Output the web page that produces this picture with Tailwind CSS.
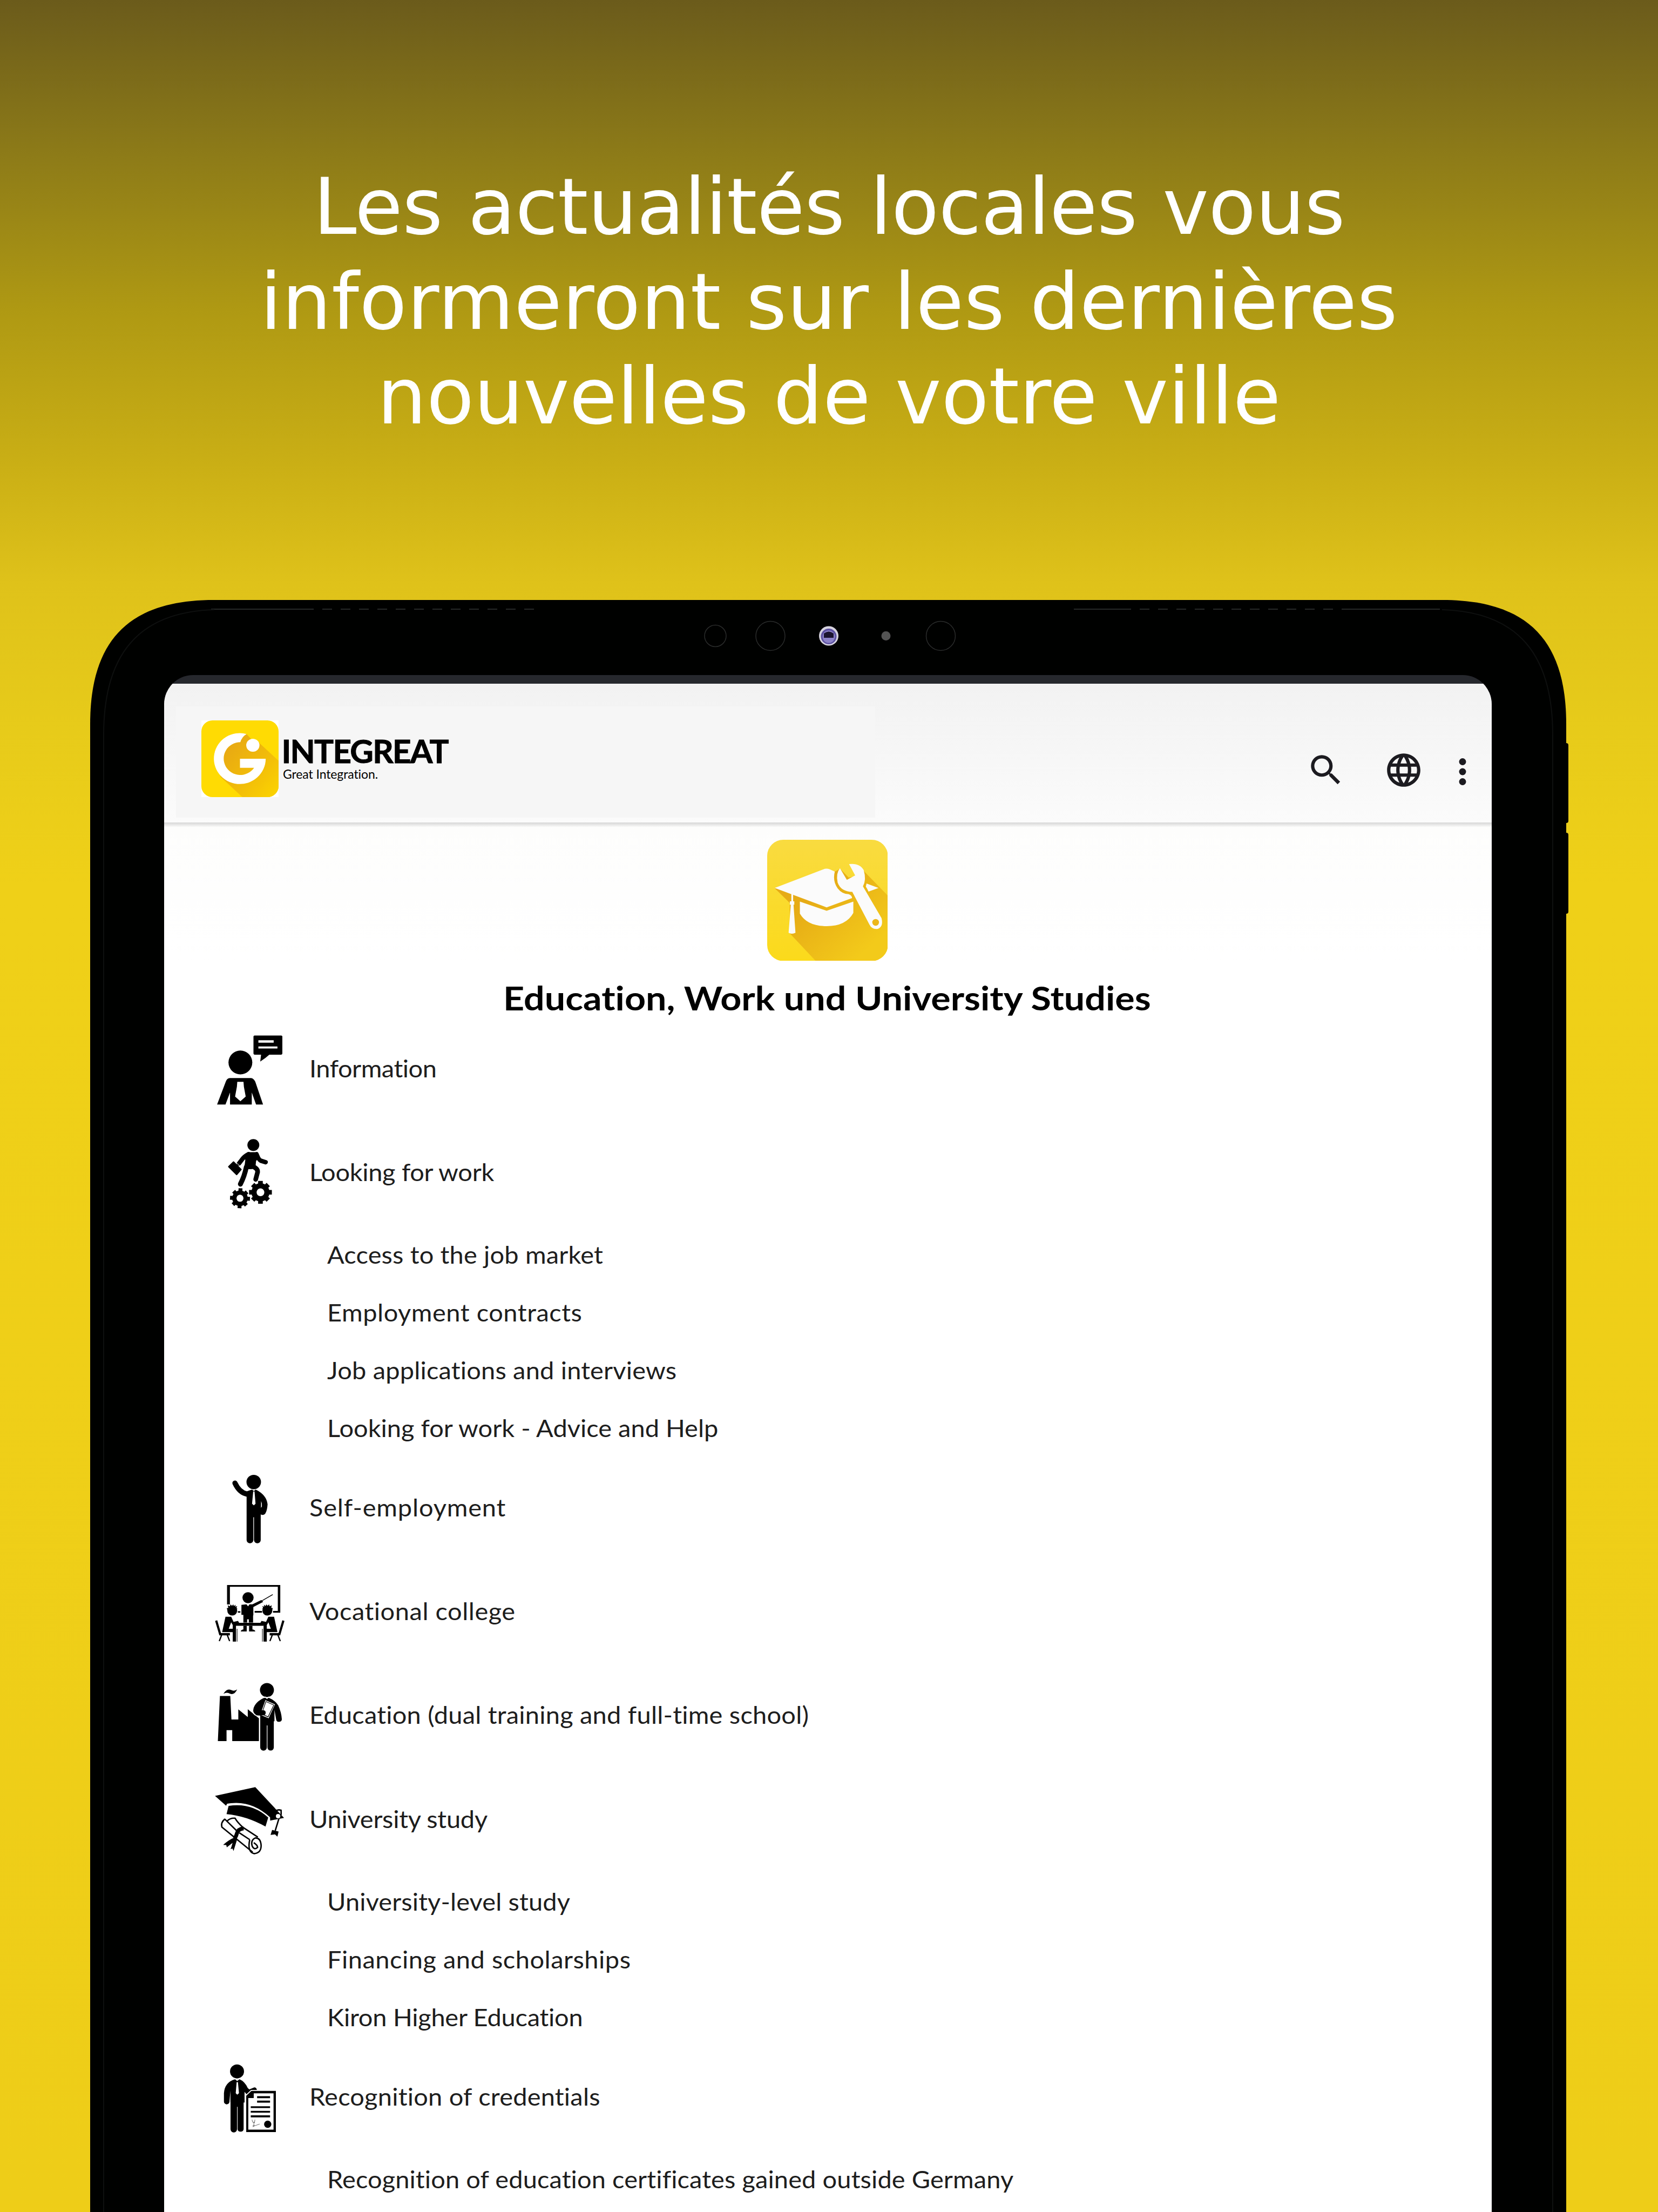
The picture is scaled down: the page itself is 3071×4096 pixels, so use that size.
<!DOCTYPE html>
<html lang="fr">
<head>
<meta charset="utf-8">
<title>Integreat</title>
<script src="https://cdn.jsdelivr.net/npm/@tailwindcss/browser@4"></script>
</head>
<body class="font-['Lato',sans-serif] [font-variant-ligatures:none]">
<main class="relative flex h-[4096px] w-[3071px] flex-col overflow-hidden bg-[linear-gradient(180deg,#6b5b1b_0%,#8d7b18_7%,#af9913_14%,#caaf15_21%,#dfc21a_26.4%,#e7cb1a_33%,#efd018_40%,#eecd18_100%)]">
  <h1 class="h-[1111px] shrink-0 pt-[296px] text-center font-['DejaVu_Sans',sans-serif] text-[144px] leading-[175.5px] text-white">
    <span class="tracking-[-0.6px] [word-spacing:2px]">Les actualités locales vous</span><br><span class="tracking-[0.6px]">informeront sur les dernières</span><br><span>nouvelles de votre ville</span>
  </h1>

  <section class="relative ml-[167px] flex w-[2734px] flex-1 flex-col pl-[136.5px] pt-[139px]">
    <svg class="absolute left-0 top-0 h-[2985px] w-[2738px]" viewBox="0 0 2738 2985">
      <path d="M0 2985V230C0 73 73 0 230 0H2504C2661 0 2734 73 2734 230V2985Z" fill="#000100"/>
      <rect x="2728" y="265" width="10" height="148" rx="4" fill="#000100"/><rect x="2728" y="431" width="10" height="150" rx="4" fill="#000100"/>
      <g fill="none" stroke="#262928" stroke-width="2">
        <path d="M224 17H396"/><path d="M396 17H830" stroke-dasharray="18 16"/>
        <path d="M1822 17H1910"/><path d="M1910 17H2330" stroke-dasharray="18 16"/><path d="M2330 17H2500"/>
      </g>
      <g fill="none" stroke="#0e100f" stroke-width="2"><path d="M25 2985V250C25 100 90 22 230 18"/><path d="M2709 2985V250C2709 100 2644 22 2504 18"/></g>
      <g fill="none" stroke="#2a2c2b" stroke-width="1.5"><circle cx="1158" cy="66.5" r="20"/><circle cx="1260" cy="66.5" r="27"/><circle cx="1575.5" cy="66.5" r="27"/></g>
      <circle cx="1368" cy="66.5" r="18" fill="#d6d3df"/><circle cx="1368" cy="67.5" r="14.5" fill="#5b50a0"/><circle cx="1368" cy="68" r="11.5" fill="#8c82c8"/>
      <path d="M1359 62Q1368 55 1377 62V70H1359Z" fill="#1b1430"/>
      <circle cx="1474" cy="66.5" r="8.5" fill="#545454"/>
    </svg>

    <div class="relative flex w-[2459px] flex-1 flex-col overflow-hidden rounded-t-[54px] bg-[#26282d] pt-[15.5px]">
      <header class="relative flex h-[257px] shrink-0 bg-linear-to-b from-[#f2f2f2] to-[#fbfbfb]">
        <div class="mt-[42px] mb-[9px] ml-[22px] flex w-[1295px] bg-[#f6f6f6] pt-[26px] pl-[47px]">
          <svg class="h-[142px] w-[143px] shrink-0 bg-white" viewBox="83 100 432 593" preserveAspectRatio="none">
            <defs>
              <linearGradient id="logoShade" x1="0" y1="0" x2="1" y2="1"><stop offset=".2" stop-color="#e9ab12"/><stop offset=".6" stop-color="#f2bd09"/><stop offset="1" stop-color="#fcd500"/></linearGradient>
              <clipPath id="logoClip"><rect x="83" y="100" width="432" height="593" rx="62" ry="85"/></clipPath>
            </defs>
            <g clip-path="url(#logoClip)">
              <path d="M83 100h432v593H83z" fill="#ffdb03"/>
              <path d="M336 205L362 245L402 268L515 412V693H312L190 535L200 300Z" fill="url(#logoShade)"/>
              <path d="M336 205Q310 225 301 268A93 127 0 1 0 378 466H299V396H443A145 197 0 1 1 336 205Z" fill="#fff"/>
              <ellipse cx="371" cy="292" rx="37" ry="50" fill="#fff"/>
            </g>
          </svg>
          <div class="flex flex-col pl-[6px] pt-[25px] whitespace-nowrap text-black">
            <span class="text-[60px] leading-[62px] font-bold tracking-[-1.7px] [-webkit-text-stroke:1px_black]">INTEGREAT</span>
            <span class="pl-[2.5px] text-[23px] leading-[24px] tracking-[-0.1px]">Great Integration.</span>
          </div>
        </div>
        <div class="ml-auto flex pt-[123px] pr-[17px] text-[#1c1b20]">
          <svg class="size-[74px]" viewBox="0 0 24 24" fill="currentColor"><path d="M15.500 14h-.79l-.28-.27A6.471 6.471 0 0 0 16 9.500 6.500 6.500 0 1 0 9.500 16c1.610 0 3.090-.59 4.230-1.570l.27.28v.79l5 4.990L20.490 19l-4.990-5zm-6 0C7.010 14 5 11.990 5 9.500S7.010 5 9.500 5 14 7.010 14 9.500 11.990 14 9.500 14z"/></svg>
          <svg class="ml-[70.5px] size-[74px]" viewBox="0 0 24 24" fill="currentColor"><path d="M11.990 2C6.470 2 2 6.480 2 12s4.470 10 9.990 10C17.520 22 22 17.520 22 12S17.520 2 11.990 2zm6.930 6h-2.950c-.32-1.250-.78-2.450-1.380-3.560 1.840.63 3.370 1.910 4.330 3.560zM12 4.040c.83 1.200 1.480 2.530 1.910 3.960h-3.820c.43-1.430 1.080-2.760 1.910-3.960zM4.260 14C4.100 13.360 4 12.690 4 12s.1-1.360.26-2h3.380c-.08.66-.14 1.320-.14 2 0 .68.060 1.340.14 2H4.260zm.82 2h2.950c.32 1.250.78 2.450 1.380 3.560-1.840-.63-3.370-1.900-4.330-3.560zm2.950-8H5.080c.96-1.660 2.490-2.930 4.330-3.560C8.810 5.550 8.350 6.750 8.030 8zM12 19.960c-.83-1.200-1.480-2.530-1.910-3.960h3.820c-.43 1.430-1.080 2.760-1.910 3.960zM14.340 14H9.660c-.09-.66-.16-1.320-.16-2 0-.68.070-1.350.16-2h4.680c.09.65.16 1.320.16 2 0 .68-.07 1.340-.16 2zm.25 5.560c.6-1.110 1.060-2.310 1.380-3.560h2.950c-.96 1.650-2.490 2.930-4.330 3.560zM16.360 14c.08-.66.14-1.320.14-2 0-.68-.06-1.340-.14-2h3.380c.16.64.26 1.310.26 2s-.1 1.360-.26 2h-3.380z"/></svg>
          <svg class="ml-[34.5px] mt-[3px] size-[74px]" viewBox="0 0 24 24" fill="currentColor"><circle cx="12" cy="6" r="2.1"/><circle cx="12" cy="12" r="2.1"/><circle cx="12" cy="18" r="2.1"/></svg>
        </div>
      </header>

      <div class="flex flex-1 flex-col bg-linear-to-b from-[#fdfdfc] from-0% to-white to-10%">
        <div class="h-[9px] shrink-0 bg-linear-to-b from-[#d6d6d6] to-[#fdfdfc]"></div>
        <svg class="mt-[23px] ml-[1117px] h-[224.5px] w-[223.5px] shrink-0" viewBox="222 120 930 936" preserveAspectRatio="none">
          <defs>
            <linearGradient id="tile" x1="0" y1="0" x2="0" y2="1"><stop offset="0" stop-color="#f9db40"/><stop offset="1" stop-color="#fbda1b"/></linearGradient>
            <linearGradient id="tileShade" gradientUnits="userSpaceOnUse" x1="500" y1="600" x2="900" y2="1050"><stop offset="0" stop-color="#e6ab16"/><stop offset="1" stop-color="#f3ca1a"/></linearGradient>
            <clipPath id="tileClip"><rect x="222" y="120" width="930" height="936" rx="124"/></clipPath>
          </defs>
          <g clip-path="url(#tileClip)">
            <path d="M222 120h930v936H222z" fill="url(#tile)"/>
            <path d="M280 494L396 608V842L600 1060H1152V552L965 360L890 405L850 412L785 345L742 366L680 500Z" fill="url(#tileShade)"/>
            <g fill="#fbfbfb">
              <path d="M280 492L655 348Q678 338 705 348L743 366Q725 440 765 495Q800 540 850 540Q875 548 876 570L680 642Z"/>
              <path d="M408 540h14v55h9v26h-6L440 838Q412 852 387 838L404 621H397V595H408Z"/>
              <path d="M474 597L680 668L886 597V685Q830 787 680 787Q530 787 474 690Z"/>
              <path d="M988 458L1080 492L1003 520Q992 496 982 482Z"/>
              <path d="M853 308Q935 298 966 355Q988 430 960 480L1103 725Q1120 790 1075 808Q1030 815 1010 775L878 522Q790 520 765 450Q750 380 783 340L836 430L900 395Z"/>
            </g>
            <circle cx="1058" cy="758" r="26" fill="#ecb71a"/>
          </g>
        </svg>
        <h2 class="mt-[33px] h-[70px] shrink-0 origin-center scale-x-110 pr-[3px] text-center text-[62px] leading-[70px] font-bold whitespace-nowrap text-black">Education, Work und University Studies</h2>

        <ul class="mt-[3px] flex shrink-0 flex-col pl-[94px] text-[43.5px] whitespace-nowrap text-[#1d1d1d]">
          <li class="flex h-[192.3px] items-center gap-[45px]">
            <svg class="size-[130.5px] shrink-0 overflow-visible" viewBox="96 129 544 544">
              <circle cx="293" cy="343" r="92"/><rect x="394" y="135" width="223" height="148" rx="9"/><path d="M453 280L446 336Q485 312 520 280Z"/>
              <path d="M432 172h118v18H432zM432 220h147v15H432z" fill="#fff"/>
              <path d="M113 668L180 492Q190 464 212 464H375Q395 466 408 492L468 668H414L381 575V668H213V575L178 668Z"/>
              <path d="M269 493H317L320 530L334 606L293 643L252 606L266 530Z" fill="#fff"/>
            </svg>
            <span class="origin-left scale-x-108 pb-[6px] tracking-[-0.44px]">Information</span>
          </li>
          <li class="flex h-[192.3px] items-center gap-[45px]">
            <svg class="size-[130.5px] shrink-0 overflow-visible" viewBox="96 930 544 544">
              <circle cx="393" cy="981" r="46"/>
              <path d="M350 1036H424L442 1066L414 1105L410 1145L380 1168H322L331 1096L320 1060Z"/>
              <g fill="none" stroke="#000" stroke-linecap="round" stroke-linejoin="round">
                <path d="M356 1052Q320 1070 302 1098L282 1124" stroke-width="34"/><path d="M418 1052Q432 1092 450 1102L488 1114" stroke-width="34"/>
                <path d="M339 1150Q325 1220 293 1283" stroke-width="38"/><path d="M385 1146Q428 1160 426 1190L411 1246" stroke-width="36"/>
                <path d="M240 1112L298 1170L264 1209L203 1148Z" stroke-width="10" fill="#000"/>
                <path d="M262 1122Q285 1130 290 1148" stroke="#fff" stroke-width="4"/>
              </g>
              <g stroke="#000" stroke-width="40"><circle cx="448" cy="1346" r="50"/><path d="M448 1258V1434M360 1346H536M388 1286L508 1406M508 1286L388 1406" stroke-width="36"/></g>
              <g stroke="#000" stroke-width="34" transform="rotate(3 290 1392)"><circle cx="290" cy="1392" r="43"/><path d="M290 1315V1469M213 1392H367M238 1340L342 1444M342 1340L238 1444" stroke-width="30"/></g>
              <circle cx="448" cy="1346" r="30" fill="#fff"/><circle cx="290" cy="1392" r="27" fill="#fff"/>
            </svg>
            <span class="origin-left scale-x-108 pb-[6px] tracking-[-0.3px]">Looking for work</span>
          </li>
          <li class="pb-[0.4px] pl-[208px]">
            <ul class="flex origin-left scale-x-108 flex-col leading-[107.1px]">
              <li class="tracking-[0.14px]">Access to the job market</li>
              <li class="tracking-[0.49px]">Employment contracts</li>
              <li class="tracking-[0.16px]">Job applications and interviews</li>
              <li>Looking for work - Advice and Help</li>
            </ul>
          </li>
          <li class="flex h-[192.3px] items-center gap-[45px]">
            <svg class="size-[130.5px] shrink-0 overflow-visible" viewBox="96 99 544 544">
              <circle cx="396" cy="163" r="56"/><path d="M251 171Q285 245 345 256" fill="none" stroke="#000" stroke-width="40" stroke-linecap="round"/>
              <path d="M341 236Q365 226 383 221L397 232L411 221Q495 262 503 335Q500 385 484 408Q470 422 450 413V611A26 25 0 0 1 398 611V435H393V611A26 25 0 0 1 341 611Z"/>
              <path d="M392 236H402L410 330L397 343L383 330Z" fill="#fff"/><path d="M453 310Q462 330 459 350L452 363Z" fill="#fff"/>
            </svg>
            <span class="origin-left scale-x-108 pb-[6px] tracking-[0.78px]">Self-employment</span>
          </li>
          <li class="flex h-[192.3px] items-center gap-[45px]">
            <svg class="size-[130.5px] shrink-0 overflow-visible" viewBox="96 901 544 544">
              <path d="M190 955H601V1169H545V1155H582V969H212V1105H190ZM403 1155H460V1169H403ZM272 1157H293V1169H274Z"/>
              <circle cx="352" cy="1053" r="43"/>
              <path d="M301 1108L340 1104L352 1120L364 1104H386L455 1071L469 1085L393 1125V1190H391V1245H358V1220H345V1245H316V1186H301Z"/>
              <path d="M460 1077L543 1029" stroke="#000" stroke-width="6"/>
              <path d="M316 1270H342V1314H296Q296 1302 316 1298ZM360 1270H386V1298Q408 1302 408 1314H360Z"/>
              <path d="M258 1247H473V1270H258Z"/>
              <g id="pupil">
                <circle cx="230" cy="1153" r="38"/><path d="M192 1150L188 1132L200 1133L196 1112L212 1120L217 1104L228 1117L238 1104L243 1118L256 1107L254 1123L268 1118L263 1133L272 1140Z"/>
                <path d="M178 1200H222L240 1240L275 1232L285 1250V1262H232L222 1243L203 1293H250V1319H152Z"/>
                <path d="M234 1247H259V1392H234Z"/><path d="M263 1293H272V1392H263Z" fill="#777"/>
                <path d="M106 1230L137 1335H212" fill="none" stroke="#000" stroke-width="17"/><path d="M148 1342L130 1388M192 1342L210 1388" stroke="#000" stroke-width="10"/>
              </g>
              <use href="#pupil" transform="matrix(-1 0 0 1 731 0)"/>
            </svg>
            <span class="origin-left scale-x-108 pb-[6px] tracking-[0.48px]">Vocational college</span>
          </li>
          <li class="flex h-[192.3px] items-center gap-[45px]">
            <svg class="size-[130.5px] shrink-0 overflow-visible" viewBox="96 82.5 544 544">
              <path d="M162 176Q188 132 220 146Q245 160 268 142Q247 188 213 175Q188 160 162 176Z"/>
              <path d="M135 193H215L224 374H277V296L350 356V295L436 365V541H230V457H186V541H119Z"/>
              <circle cx="498" cy="147" r="54"/>
              <path d="M470 210L485 206L498 216L512 206Q560 225 585 265Q610 320 613 372A22 20 0 0 1 570 378L556 300V388H551V590A24 24 0 0 1 502 590V420H497V590A24 24 0 0 1 446 590V344Q400 345 392 310Q392 250 470 210Z" stroke="#fff" stroke-width="16" paint-order="stroke"/>
              <path d="M486 225L560 258L511 365L446 338Z" fill="#fff"/><path d="M490 236L551 263L507 354L457 332Z" fill="none" stroke="#000" stroke-width="5"/>
              <path d="M415 303H472A16 19 0 0 1 472 342H415Z"/>
            </svg>
            <span class="origin-left scale-x-108 pb-[6px] tracking-[0.2px]">Education (dual training and full-time school)</span>
          </li>
          <li class="flex h-[192.3px] items-center gap-[45px]">
            <svg class="size-[130.5px] shrink-0 overflow-visible" viewBox="96 884 544 544">
              <path d="M97 965L408 898L630 1135L523 1156L522 1130Q400 1018 260 1019Q215 1020 190 1026L183 1041Z"/>
              <path d="M202 1042Q380 1015 508 1132L487 1202Q340 1120 186 1106Z"/>
              <g fill="none" stroke="#000" stroke-width="11">
                <path d="M566 1082Q580 1068 607 1076L608 1112"/><path d="M592 1136L562 1234"/>
                <path d="M174 1143Q140 1170 150 1206L388 1400M172 1144L262 1232M190 1160Q215 1134 252 1138Q270 1170 312 1208L428 1284M285 1250L365 1303"/>
                <path d="M365 1303Q345 1400 400 1411Q455 1405 453 1345Q448 1288 408 1290Q372 1305 383 1350Q398 1388 426 1362Q426 1345 396 1326"/>
                <path d="M318 1216Q275 1220 266 1255Q262 1275 248 1295" stroke-width="30"/>
              </g>
              <circle cx="584" cy="1122" r="17" fill="#fff"/><path d="M538 1228L588 1240L579 1280L560 1262L526 1266Z"/>
              <path d="M250 1285Q200 1305 160 1344L184 1345L188 1362L262 1305ZM240 1290Q235 1330 217 1376L232 1372L240 1391L268 1300Z"/>
            </svg>
            <span class="origin-left scale-x-108 pb-[6px] tracking-[-0.25px]">University study</span>
          </li>
          <li class="pb-[0.4px] pl-[208px]">
            <ul class="flex origin-left scale-x-108 flex-col leading-[107.1px]">
              <li class="tracking-[0.1px]">University-level study</li>
              <li class="tracking-[0.47px]">Financing and scholarships</li>
              <li class="tracking-[-0.23px]">Kiron Higher Education</li>
            </ul>
          </li>
          <li class="flex h-[192.3px] items-center gap-[45px]">
            <svg class="size-[130.5px] shrink-0 overflow-visible" viewBox="96 86.5 544 544">
              <circle cx="267" cy="152" r="54"/>
              <path d="M252 213L268 226L286 213Q325 228 350 280L362 291L400 275Q418 275 421 297L342 330L325 310V392H318V598A24 24 0 0 1 271 598V425H267V598A24 24 0 0 1 217 598V390H216V300L208 390Q205 405 185 406Q165 400 166 385V320Q172 235 252 213Z"/>
              <path d="M264 235H274L282 320L269 331L257 320Z" fill="#fff"/>
              <path d="M338 340L378 302H567V620H338Z" stroke="#fff" stroke-width="14" paint-order="stroke"/>
              <path d="M396 321H549V601H354V357H396Z" fill="#fff"/>
              <path d="M422 343h100v16H422zM422 377h100v16H422zM373 421h149v14H373zM373 456h149v14H373zM373 491h149v15H373z"/>
              <circle cx="504" cy="560" r="28"/><path d="M383 524L387 543L402 548L405 524M397 540V578M387 572L402 570L388 580M402 572L442 558" fill="none" stroke="#333" stroke-width="3"/>
            </svg>
            <span class="origin-left scale-x-108 pb-[6px] tracking-[0.2px]">Recognition of credentials</span>
          </li>
          <li class="pl-[208px] leading-[107.1px]"><div class="origin-left scale-x-108 tracking-[0.09px]">Recognition of education certificates gained outside Germany</div></li>
        </ul>
      </div>
    </div>
  </section>
</main>
</body>
</html>
